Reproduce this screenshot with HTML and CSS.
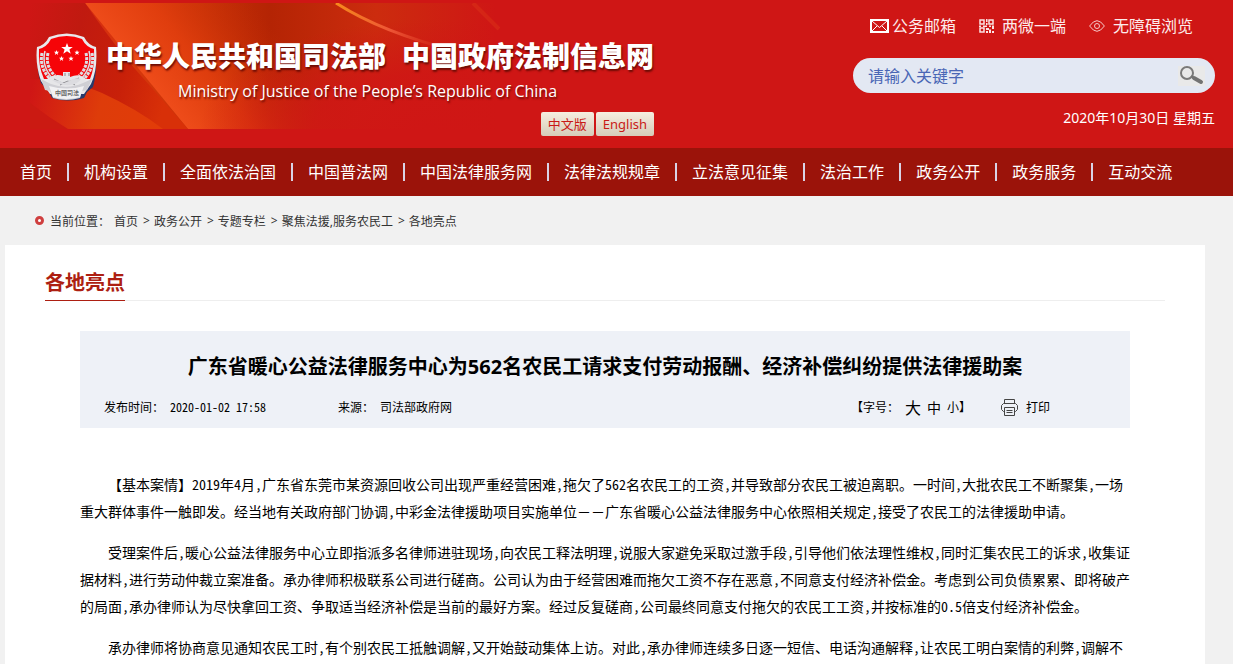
FILE: index.html
```html
<!DOCTYPE html>
<html lang="zh-CN">
<head>
<meta charset="utf-8">
<title>广东省暖心公益法律服务中心为562名农民工请求支付劳动报酬、经济补偿纠纷提供法律援助案</title>
<link rel="stylesheet" href="styles.css">
</head>
<body>
<header class="site-header">
  <svg class="banner" viewBox="0 0 480 126" width="480" height="126" aria-hidden="true">
    <defs>
      <linearGradient id="base" x1="0" x2="1" y1="0" y2="0">
        <stop offset="0" stop-color="#cf1615"/><stop offset=".2" stop-color="#d8380c"/>
        <stop offset=".36" stop-color="#c63006"/><stop offset=".5" stop-color="#b42404"/>
        <stop offset=".72" stop-color="#cc2c0e"/><stop offset=".97" stop-color="#cf1615"/>
      </linearGradient>
      <linearGradient id="glow" gradientUnits="userSpaceOnUse" x1="106" y1="63" x2="206" y2="-19">
        <stop offset="0" stop-color="#ee4c1a"/><stop offset=".4" stop-color="#e4400f" stop-opacity=".8"/><stop offset="1" stop-color="#c63006" stop-opacity="0"/>
      </linearGradient>
      <linearGradient id="left" gradientUnits="userSpaceOnUse" x1="0" x2="150" y1="0" y2="40">
        <stop offset="0" stop-color="#cf1615"/><stop offset=".35" stop-color="#c01a10"/><stop offset=".7" stop-color="#c82009"/><stop offset="1" stop-color="#d83008"/>
      </linearGradient>
      <linearGradient id="low" gradientUnits="userSpaceOnUse" x1="0" x2="138" y1="90" y2="126">
        <stop offset="0" stop-color="#cf1615"/><stop offset=".5" stop-color="#de3c0a"/><stop offset="1" stop-color="#e23c08"/>
      </linearGradient>
      <radialGradient id="fade" gradientUnits="userSpaceOnUse" cx="0" cy="0" r="1" gradientTransform="translate(400 126) scale(230 110)">
        <stop offset="0" stop-color="#cf1615"/><stop offset=".5" stop-color="#cf1615" stop-opacity=".85"/><stop offset="1" stop-color="#cf1615" stop-opacity="0"/>
      </radialGradient>
      <linearGradient id="streak" x1="0" x2="1" y1="0" y2="0">
        <stop offset="0" stop-color="#f68a1c"/><stop offset=".45" stop-color="#ee5536"/><stop offset="1" stop-color="#d8301a" stop-opacity="0"/>
      </linearGradient>
    </defs>
    <path fill="url(#base)" d="M0 0h480v126H0z"/>
    <path fill="url(#glow)" d="M55 0h285v126H158z"/>
    <path fill="url(#fade)" d="M158 0h322v126H158z"/>
    <path fill="url(#left)" d="M0 0h55q22 32 43 58L158 126H0z"/>
    <path fill="url(#low)" d="M0 76q40 0 72 14 35 16 61 36H0z"/>
    <path fill="#cb1a12" d="M0 100q18 14 38 26H0z"/>
    <path fill="none" stroke="url(#streak)" stroke-width="3" d="M306 0q45 29 120 48"/>
    <path fill="none" stroke="#df3a18" stroke-opacity=".4" stroke-width="4" d="M443 0q14 14 26 26"/>
  </svg>
  <div class="brand">
    <svg class="emblem" viewBox="0 0 62 68" width="62" height="68" role="img" aria-label="中国司法">
      <path fill="#2a3a6b" d="M4 14Q10 13 14 5Q31-2 48 5q4 8 11 9 3 22-2 40l-6 5-3 6q-16 5-32 0l-4-8-7-7Q-1 34 4 14z"/>
      <path fill="#e9e9ec" d="M1 14Q9 12 13 4Q31-3 48 4q4 8 12 10 2 22-5 37L48 61H14L5 48Q-1 31 1 14z"/>
      <path fill="#f60408" d="M3 16Q11 14 15 6q16-6 31 0 4 8 12 10 1 18-4 30H8Q2 33 3 16z"/>
      <g fill="#fff">
        <path d="m31 10 1.500 4h4.300l-3.400 2.600 1.300 4.200-3.700-2.500-3.700 2.500 1.300-4.200-3.400-2.600h4.300z"/>
        <path d="m20.500 17 .7 1.800h1.900l-1.500 1.200.6 2-1.700-1.200-1.700 1.200.6-2-1.500-1.200h1.900zM41 17l.7 1.800h1.900L42.100 20l.6 2-1.700-1.200-1.700 1.200.6-2-1.500-1.200h1.900zM25.500 23l.7 1.800h1.900L26.600 26l.6 2-1.700-1.200-1.700 1.200.6-2-1.500-1.200h1.900zM35 23l.7 1.800h1.900L36.100 26l.6 2-1.700-1.200-1.700 1.200.6-2-1.500-1.200h1.900z"/>
      </g>
      <g fill="none" stroke="#dedee2">
        <path stroke-width="1.500" d="M9 18Q5 33 17 46M53 18Q57 33 45 46"/>
        <path stroke-width="3" stroke-dasharray="3 1" d="M6 20Q3 34 14 46M12 20Q9 33 19 43M56 20Q59 34 48 46M50 20Q53 33 43 43"/>
      </g>
      <path fill="#e6e6e8" d="M12 45q8-5 15-2v-4h7v5q9-4 15 1l1 8H12z"/>
      <path fill="none" stroke="#8b8b90" d="m18 46 8 4 9-2 8-3M24 52l8-4 7 4M29 40v3M33 40v3"/>
      <path fill="#cfcfd4" d="m5 46 10 5q16 6 32-1l9-4-5 11-5 1-2 7q-14 4-27 0l-3-7-5-1z"/>
      <path fill="#f1f1f3" d="M13 53q18 5 35 0l-4 11q-14 4-27 0z"/>
      <path fill="#dcdce0" d="M16 47q8 0 12 3l5-2q6-4 12-2-3 5-11 6-10 1-18-5z"/>
      <text class="emblem-text" x="31" y="62" text-anchor="middle">中国司法</text>
    </svg>
    <div class="names">
      <h1 class="site-name"><span>中华人民共和国司法部</span><span>中国政府法制信息网</span></h1>
      <p class="site-name-en">Ministry of Justice of the People’s Republic of China</p>
      <div class="langs"><a class="lang" href="#">中文版</a><a class="lang" href="#">English</a></div>
    </div>
  </div>
  <div class="tools">
    <div class="quick">
      <a class="mail" href="#"><svg width="19" height="14" viewBox="0 0 19 14" fill="none" stroke="#fff"><path stroke-width="2" d="M1 1h17v12H1z"/><path d="m2 2 7.500 6.500L17 2M2 12l5-5M17 12l-5-5"/></svg>公务邮箱</a>
      <a href="#"><svg width="15" height="14" viewBox="0 0 15 14"><path fill="none" stroke="#fbe3e3" stroke-width="1.500" d="M1 1h4v4H1zM10 1h4v4h-4zM1 9h4v4H1z"/><path fill="#fbe3e3" d="M7 0h1.500v3H7zM7 4h1.500v2H7zM0 6.500h2V8H0zM4 6.500h4V8H4zM10 6.500h2V8h-2zM13 6.500h2V10h-2zM7 9h3v2H7zM10 10.500h2V14h-2zM7 12h2v2H7zM13 12h2v2h-2z"/></svg>两微一端</a>
      <a class="eye" href="#"><svg width="16" height="12" viewBox="0 0 16 12" fill="none" stroke="#f6c9c9"><path d="M.6 6Q8-4.600 15.400 6 8 16.600.6 6z"/><circle cx="8" cy="6" r="2.500"/></svg>无障碍浏览</a>
    </div>
    <form class="search">
      <input class="search-input" type="text" placeholder="请输入关键字" aria-label="请输入关键字">
      <button class="search-button" type="button" aria-label="搜索"><svg width="27" height="20" viewBox="0 0 27 20"><path fill="#e9e9e9" d="M0 0h27v20H0z"/><circle cx="9" cy="7" r="6" fill="none" stroke="#7a7a7a" stroke-width="2"/><path stroke="#737373" stroke-width="2" d="m13 10 3 2"/><path stroke="#737373" stroke-width="4" stroke-linecap="round" d="m16 12 7 4"/></svg></button>
    </form>
    <p class="date">2020年10月30日 星期五</p>
  </div>
</header>
<nav class="main-nav">
  <a href="#">首页</a><a href="#">机构设置</a><a href="#">全面依法治国</a><a href="#">中国普法网</a><a href="#">中国法律服务网</a><a href="#">法律法规规章</a><a href="#">立法意见征集</a><a href="#">法治工作</a><a href="#">政务公开</a><a href="#">政务服务</a><a href="#">互动交流</a>
</nav>
<div class="crumbs">
  <span class="dot"></span><span class="here">当前位置：</span>
  <a href="#">首页</a><span>&gt;</span><a href="#">政务公开</a><span>&gt;</span><a href="#">专题专栏</a><span>&gt;</span><a href="#">聚焦法援,服务农民工</a><span>&gt;</span><a href="#">各地亮点</a>
</div>
<main class="page">
  <div class="section-head"><h2 class="section-title">各地亮点</h2></div>
  <article class="article">
    <div class="article-head">
      <h3 class="article-title">广东省暖心公益法律服务中心为562名农民工请求支付劳动报酬、经济补偿纠纷提供法律援助案</h3>
      <div class="meta">
        <span class="published">发布时间： 2020-01-02 17:58</span>
        <span>来源： 司法部政府网</span>
        <div class="sizes"><span>【字号：</span><button class="size size-l" type="button">大</button><button class="size size-m" type="button">中</button><button class="size" type="button">小</button><span>】</span></div>
        <button class="print" type="button"><svg width="17" height="17" viewBox="0 0 17 17" fill="none" stroke="#444"><path d="M3.500 4.500v-4h10v4M3.500 12.500h-1l-2-2v-4l2-2h12l2 2v4l-2 2h-1M3.500 8.500h10v8h-10zM5.500 11.500h6M5.500 13.500h6"/></svg>打印</button>
      </div>
    </div>
    <div class="body-text">
      <p>【基本案情】2019年4月,广东省东莞市某资源回收公司出现严重经营困难,拖欠了562名农民工的工资,并导致部分农民工被迫离职。一时间,大批农民工不断聚集,一场重大群体事件一触即发。经当地有关政府部门协调,中彩金法律援助项目实施单位<span class="full-width">－－</span>广东省暖心公益法律服务中心依照相关规定,接受了农民工的法律援助申请。</p>
      <p>受理案件后,暖心公益法律服务中心立即指派多名律师进驻现场,向农民工释法明理,说服大家避免采取过激手段,引导他们依法理性维权,同时汇集农民工的诉求,收集证据材料,进行劳动仲裁立案准备。承办律师积极联系公司进行磋商。公司认为由于经营困难而拖欠工资不存在恶意,不同意支付经济补偿金。考虑到公司负债累累、即将破产的局面,承办律师认为尽快拿回工资、争取适当经济补偿是当前的最好方案。经过反复磋商,公司最终同意支付拖欠的农民工工资,并按标准的0.5倍支付经济补偿金。</p>
      <p>承办律师将协商意见通知农民工时,有个别农民工抵触调解,又开始鼓动集体上访。对此,承办律师连续多日逐一短信、电话沟通解释,让农民工明白案情的利弊,调解不</p>
    </div>
  </article>
</main>
</body>
</html>
```

FILE: styles.css
```css
* { box-sizing: border-box; }
body {
  margin: 0;
  background: #f1f1f1;
  color: #000;
  font-family: "Noto Sans", "Noto Sans CJK SC", sans-serif;
  font-size: 12px;
  text-spacing-trim: space-all;
}
h1, h2, h3, p { margin: 0; }
a { color: inherit; text-decoration: none; }
button { border: 0; padding: 0; background: none; color: inherit; font: inherit; cursor: pointer; }
svg { display: block; flex: none; }

.site-header {
  position: relative;
  display: flex;
  justify-content: space-between;
  min-height: 148px;
  padding: 0 18px 0 36px;
  background: #cf1615;
  color: #fff;
}
.banner { position: absolute; left: 30px; top: 3px; }
.brand { position: relative; display: flex; gap: 8px; }
.emblem { margin-top: 33px; }
.emblem-text { font-size: 6px; font-weight: 700; fill: #666; }
.names { padding-top: 35px; }
.site-name {
  display: flex;
  gap: 16px;
  font-size: 28px;
  line-height: 40px;
  font-weight: 900;
  font-family: "Noto Sans CJK SC", sans-serif;
  text-shadow: 1px 2px 2px #6b0c05;
  white-space: nowrap;
}
.site-name-en {
  padding-left: 72px;
  font-family: "Open Sans", sans-serif;
  font-size: 16px;
  line-height: 32px;
  text-shadow: 1px 2px 2px #6b0c05;
}
.langs { display: flex; justify-content: flex-end; gap: 2px; margin-top: 5px; }
.lang {
  padding: 0 7px;
  border-radius: 2px;
  background: linear-gradient(#f6eee0, #d6ccb9);
  color: #c91a17;
  font-size: 13px;
  line-height: 24px;
}

.tools { position: relative; width: 362px; padding-top: 14px; }
.quick { display: flex; gap: 23px; padding-left: 17px; font-size: 16px; line-height: 24px; white-space: nowrap; }
.quick a { display: flex; align-items: center; gap: 8px; color: #fdecec; }
.quick .mail { gap: 3px; }
.search {
  display: flex;
  align-items: center;
  height: 35px;
  margin-top: 20px;
  padding: 0 10px 0 15px;
  border-radius: 18px;
  background: #e3e8f3;
}
.search-input {
  flex: 1;
  min-width: 0;
  padding: 0;
  border: 0;
  outline: 0;
  background: none;
  color: #4a66b5;
  font: inherit;
  font-size: 16px;
}
.search-input::placeholder { color: #4a66b5; }
.date { margin-top: 14px; font-size: 14px; line-height: 22px; text-align: right; }

.main-nav {
  display: flex;
  align-items: center;
  min-height: 48px;
  padding-left: 5px;
  background: #9b130a;
  color: #fff;
  font-size: 16px;
  line-height: 18px;
  white-space: nowrap;
}
.main-nav a { padding: 0 15px; }
.main-nav a + a { border-left: 2px solid #d9d3e6; }

.crumbs {
  display: flex;
  align-items: center;
  gap: 4px;
  min-height: 49px;
  padding-left: 35px;
  color: #333;
}
.crumbs a { padding-right: 1px; }
.dot { width: 9px; height: 9px; border: 3px solid #cf3f3f; border-radius: 50%; background: #fff; }
.here { margin-left: 2px; }

.page { margin: 0 28px 0 5px; padding: 20px 40px 40px; background: #fff; }
.section-head { display: flex; border-bottom: 1px solid #eee; }
.section-title {
  margin-bottom: -1px;
  border-bottom: 1px solid #ad1f12;
  color: #ad1f12;
  font-size: 20px;
  line-height: 35px;
}
.article { padding: 30px 35px 0; }
.article-head { padding: 21px 24px 9px; background: #eef1f7; }
.article-title { font-size: 20px; line-height: 30px; text-align: center; }
.meta {
  display: flex;
  align-items: center;
  margin-top: 13px;
  padding-right: 56px;
  line-height: 24px;
  font-family: "Noto Sans CJK SC", sans-serif;
  font-feature-settings: "hwid";
}
.published { margin-right: 72px; }
.sizes { display: flex; align-items: center; margin-left: auto; }
.size { margin-right: 4px; }
.size + .size { margin-left: 2px; }
.size-l { margin-left: 6px; font-size: 16px; }
.size-m { font-size: 14px; }
.size:nth-last-child(2) { margin-right: 0; }
.print { display: flex; align-items: center; gap: 8px; margin-left: 30px; }

.body-text {
  padding-top: 43px;
  font-family: "Noto Sans CJK SC", sans-serif;
  font-feature-settings: "hwid";
  font-size: 14px;
  line-height: 27px;
}
.body-text p { margin-bottom: 14px; text-indent: 2em; }
.full-width { font-feature-settings: normal; }
```
